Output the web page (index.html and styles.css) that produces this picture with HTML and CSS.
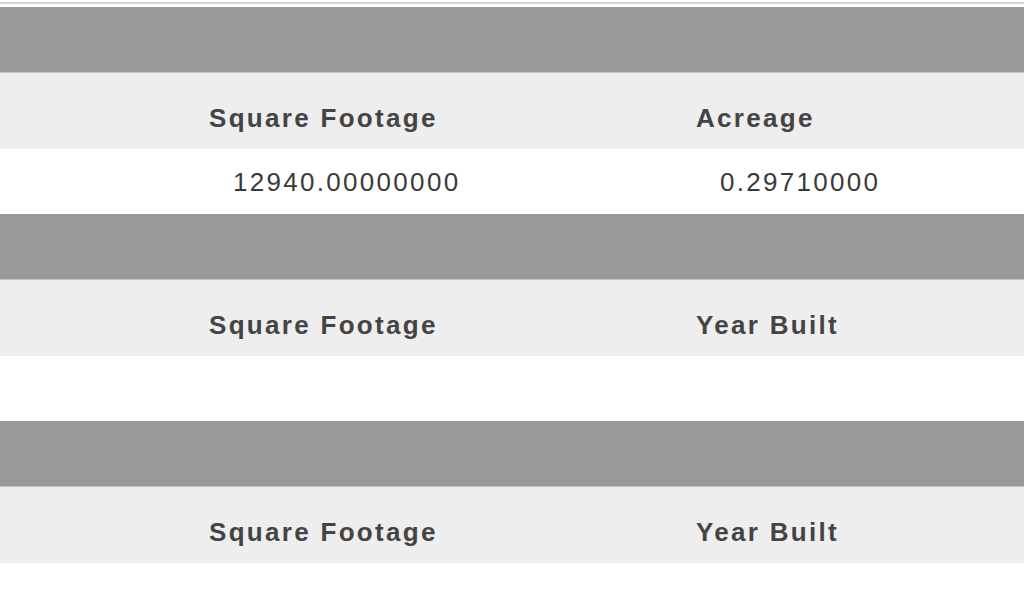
FILE: index.html
```html
<!DOCTYPE html>
<html>
<head>
<meta charset="utf-8">
<link rel="stylesheet" href="styles.css">
</head>
<body>
<div class="page">
  <div class="topline"></div>
  <section class="block">
    <div class="band"></div>
    <div class="row head">
      <div class="cell">Square Footage</div>
      <div class="cell">Acreage</div>
    </div>
    <div class="row data">
      <div class="cell">12940.00000000</div>
      <div class="cell">0.29710000</div>
    </div>
  </section>
  <section class="block">
    <div class="band"></div>
    <div class="row head">
      <div class="cell">Square Footage</div>
      <div class="cell">Year Built</div>
    </div>
    <div class="row data">
      <div class="cell"></div>
      <div class="cell"></div>
    </div>
  </section>
  <section class="block">
    <div class="band"></div>
    <div class="row head">
      <div class="cell">Square Footage</div>
      <div class="cell">Year Built</div>
    </div>
    <div class="row data">
      <div class="cell"></div>
      <div class="cell"></div>
    </div>
  </section>
</div>
</body>
</html>
```
FILE: styles.css
```css
html, body {
  margin: 0;
  padding: 0;
  background: #fff;
  overflow: hidden;
}
.page {
  width: 1024px;
  font-family: "Liberation Sans", Arial, sans-serif;
  padding-top: 2px;
}
.topline {
  height: 0;
  border-top: 2px solid #d4d4d4;
  margin-bottom: 3px;
}
.band {
  height: 65px;
  background: #999999;
  border-bottom: 1px solid #c4c4c4;
}
.row {
  display: grid;
  grid-template-columns: 487px 1fr;
  padding-left: 209px;
  align-items: center;
  font-size: 26px;
  letter-spacing: 2.3px;
  box-sizing: border-box;
}
.head {
  height: 76px;
  background: #eeeeee;
  padding-top: 15px;
  font-weight: bold;
  color: #444444;
}
.data {
  height: 65px;
  background: #ffffff;
  color: #3a3a3a;
  padding-top: 2px;
}
.data .cell {
  padding-left: 24px;
}
.cell {
  white-space: nowrap;
}
```
